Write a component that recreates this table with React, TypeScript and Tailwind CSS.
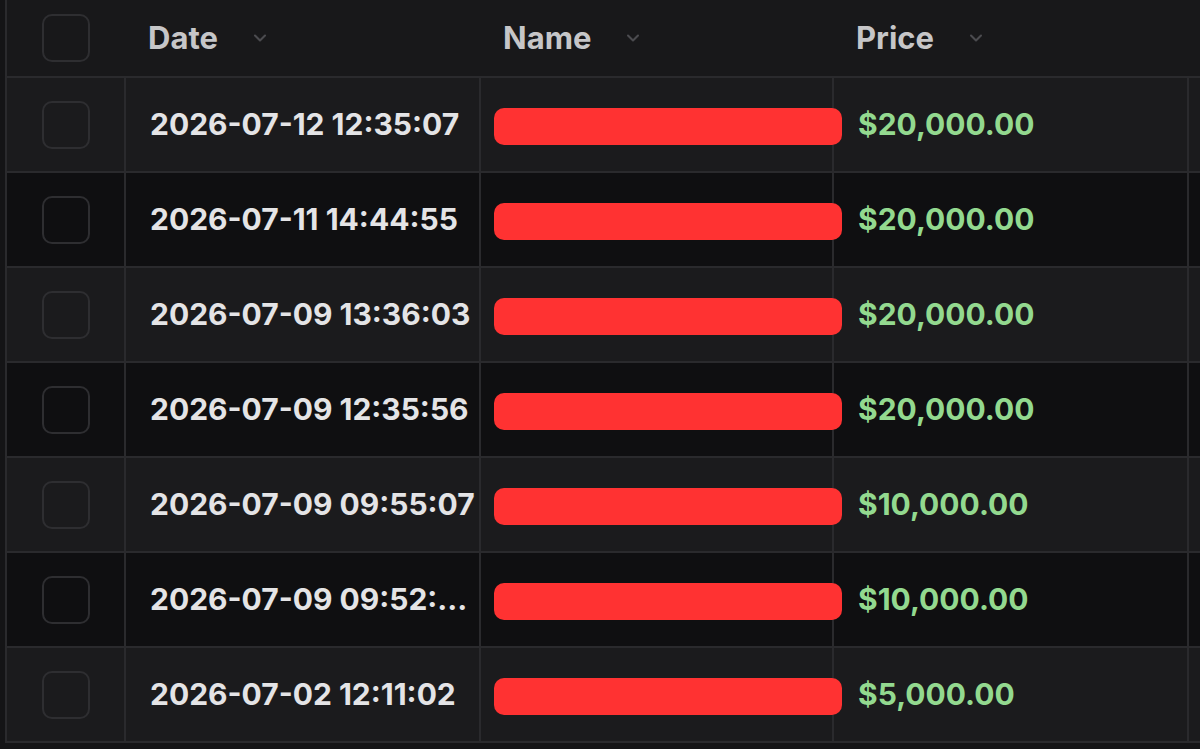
import { ChevronDown } from 'lucide-react'

type Row = {
  date: string
  price: string
}

const rows: Row[] = [
  { date: '2026-07-12 12:35:07', price: '$20,000.00' },
  { date: '2026-07-11 14:44:55', price: '$20,000.00' },
  { date: '2026-07-09 13:36:03', price: '$20,000.00' },
  { date: '2026-07-09 12:35:56', price: '$20,000.00' },
  { date: '2026-07-09 09:55:07', price: '$10,000.00' },
  { date: '2026-07-09 09:52:...', price: '$10,000.00' },
  { date: '2026-07-02 12:11:02', price: '$5,000.00' },
]

function Checkbox() {
  return <div className="w-12 h-12 rounded-[10px] border-2 border-[#2e2e31] bg-transparent" />
}

function HeaderCell({ label }: { label: string }) {
  return (
    <div className="flex items-center pl-6 text-[31px] font-bold text-[#c6c6c8]">
      <span>{label}</span>
      <ChevronDown className="ml-8 w-5 h-5 text-[#4b4b4f]" strokeWidth={2.5} />
    </div>
  )
}

function App() {
  return (
    <div
      className="min-h-screen bg-[#141416] pl-[5px] overflow-hidden"
      style={{ fontFamily: 'Inter, "Liberation Sans", sans-serif' }}
    >
      <div className="border-l-2 border-[#2a2a2d]">
        {/* header */}
        <div className="grid grid-cols-[117px_355px_353px_355px_1fr] h-[78px] bg-[#18181a] border-b-2 border-[#2a2a2d]">
          <div className="flex items-center justify-center">
            <Checkbox />
          </div>
          <HeaderCell label="Date" />
          <HeaderCell label="Name" />
          <HeaderCell label="Price" />
          <div />
        </div>

        {rows.map((row, i) => (
          <div
            key={i}
            className={
              'grid grid-cols-[117px_355px_353px_355px_1fr] h-[95px] border-b-2 border-[#2a2a2d] ' +
              (i % 2 === 0 ? 'bg-[#1b1b1d]' : 'bg-[#0f0f11]')
            }
          >
            <div className="flex items-center justify-center">
              <Checkbox />
            </div>
            <div className="flex items-center pl-6 border-l-2 border-[#2a2a2d] text-[30px] font-bold text-[#e4e4e6] whitespace-nowrap">
              {row.date}
            </div>
            <div className="flex items-center pl-[13px] border-l-2 border-[#2a2a2d]">
              <div className="relative z-10 mt-1 w-[348px] h-[37px] shrink-0 rounded-[10px] bg-[#ff3232]" />
            </div>
            <div className="flex items-center pl-6 border-l-2 border-[#2a2a2d] text-[30px] font-bold text-[#93d98f] whitespace-nowrap">
              {row.price}
            </div>
            <div className="border-l-2 border-[#2a2a2d]" />
          </div>
        ))}
      </div>
    </div>
  )
}

export default App
